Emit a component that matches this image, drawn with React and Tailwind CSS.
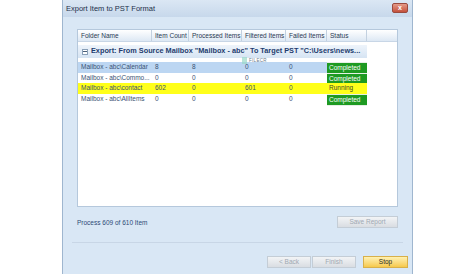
const columns = ["Folder Name", "Item Count", "Processed Items", "Filtered Items", "Failed Items", "Status"];

const rows = [
  { name: "Mailbox - abc\\Calendar", count: "8", processed: "8", filtered: "0", failed: "0", status: "Completed", bg: "bg-[#bcd6f2]" },
  { name: "Mailbox - abc\\Commo...", count: "0", processed: "0", filtered: "0", failed: "0", status: "Completed", bg: "bg-white" },
  { name: "Mailbox - abc\\contact", count: "602", processed: "0", filtered: "601", failed: "0", status: "Running", bg: "bg-[#ffff1a]" },
  { name: "Mailbox - abc\\AllItems", count: "0", processed: "0", filtered: "0", failed: "0", status: "Completed", bg: "bg-white" },
];

const grid = "grid grid-cols-[74px_37px_53px_44px_41px_40px]";

const App = () => {
  return (
    <div
      className="w-[474px] h-[274px] bg-white flex overflow-hidden"
      style={{ fontFamily: '"Liberation Sans", Arial, sans-serif' }}
    >
      <div className="ml-[62px] w-[351px] h-full bg-[#d9e7f5] border-x border-[#9fb6cf] flex flex-col">
        {/* title bar */}
        <div className="h-[17px] bg-gradient-to-b from-[#dbe7f4] to-[#c7d8eb] flex items-center justify-between pl-[3px] pr-[4px]">
          <span className="text-[7.5px] text-[#1d2f4a]">Export Item to PST Format</span>
          <div className="w-[16px] h-[10px] mt-[-2px] rounded-[2px] border border-[#9a4a3e] bg-gradient-to-b from-[#e49a88] to-[#c4503c] flex items-center justify-center">
            <span className="text-[7px] leading-none text-white font-bold">x</span>
          </div>
        </div>

        {/* list */}
        <div className="mt-[12px] mx-[14px] h-[178px] bg-white border border-[#b5c8dc] flex flex-col">
          <div className="h-[12px] bg-gradient-to-b from-[#ffffff] to-[#dde8f4] border-b border-[#c8d6e6] flex">
            <div className={grid}>
              {columns.map((c) => (
                <div key={c} className="text-[6.5px] leading-[11px] text-[#2a3a52] pl-[3px] border-r border-[#c3d1e0] whitespace-nowrap overflow-hidden">
                  {c}
                </div>
              ))}
            </div>
          </div>

          <div className="mt-[3px] w-[289px] h-[13px] bg-gradient-to-b from-[#eef4fb] to-[#d6e4f3] flex items-center pl-[4px] gap-[3px]">
            <div className="w-[6px] h-[6px] border border-[#8aa0b8] bg-white flex items-center justify-center">
              <div className="w-[4px] h-px bg-[#4a5f78]" />
            </div>
            <span className="text-[7.3px] font-bold text-[#1e3c6e] whitespace-nowrap">
              Export: From Source Mailbox "Mailbox - abc" To Target PST "C:\Users\news...
            </span>
          </div>

          <div className="relative mt-[4px] flex flex-col">
            {rows.map((r) => (
              <div key={r.name} className={`${grid} h-[10.5px] w-[289px] ${r.bg}`}>
                <div className="text-[6.5px] leading-[10.5px] text-[#3a5272] pl-[3px] whitespace-nowrap overflow-hidden">{r.name}</div>
                <div className="text-[6.5px] leading-[10.5px] text-[#3a5272] pl-[3px]">{r.count}</div>
                <div className="text-[6.5px] leading-[10.5px] text-[#3a5272] pl-[3px]">{r.processed}</div>
                <div className="text-[6.5px] leading-[10.5px] text-[#3a5272] pl-[3px]">{r.filtered}</div>
                <div className="text-[6.5px] leading-[10.5px] text-[#3a5272] pl-[3px]">{r.failed}</div>
                <div
                  className={`text-[6.5px] leading-[10.5px] pl-[2px] ${
                    r.status === "Running" ? "text-[#3a4a2a]" : "bg-[#1e9a22] text-white border-y border-[#e6efe6]"
                  }`}
                >
                  {r.status}
                </div>
              </div>
            ))}
            <div className="absolute left-[164px] top-[-5px] flex items-center gap-[2px]">
              <div className="w-[5px] h-[7px] bg-[#9ad8c8] opacity-70" />
              <span className="text-[4.5px] leading-[5px] text-[#6a7a8a] tracking-[0.3px]">FILECR</span>
            </div>
          </div>
        </div>

        {/* progress + save report */}
        <div className="mx-[14px] mt-[9px] flex items-start justify-between">
          <span className="text-[6.5px] text-[#2c4a76] mt-[2px]">Process 609 of 610 Item</span>
          <div className="w-[61px] h-[12px] border border-[#c4cdd6] bg-gradient-to-b from-[#f2f4f6] to-[#d9dde2] flex items-center justify-center">
            <span className="text-[6.5px] text-[#a0a8b2]">Save Report</span>
          </div>
        </div>

        <div className="mx-[9px] mt-[14px] h-px bg-[#c8d6e6]" />

        {/* buttons */}
        <div className="mt-[13px] mr-[4px] flex justify-end">
          <div className="w-[44px] h-[12px] border border-[#c4cdd6] bg-gradient-to-b from-[#f2f4f6] to-[#d9dde2] flex items-center justify-center">
            <span className="text-[6.5px] text-[#a0a8b2]">&lt; Back</span>
          </div>
          <div className="ml-[1px] w-[44px] h-[12px] border border-[#c4cdd6] bg-gradient-to-b from-[#f2f4f6] to-[#d9dde2] flex items-center justify-center">
            <span className="text-[6.5px] text-[#a0a8b2]">Finish</span>
          </div>
          <div className="ml-[7px] w-[45px] h-[12px] border border-[#d8b04a] bg-gradient-to-b from-[#fff1b0] to-[#f6c94a] flex items-center justify-center">
            <span className="text-[6.5px] text-[#2a2a1a]">Stop</span>
          </div>
        </div>
      </div>
    </div>
  );
};

export default App;
